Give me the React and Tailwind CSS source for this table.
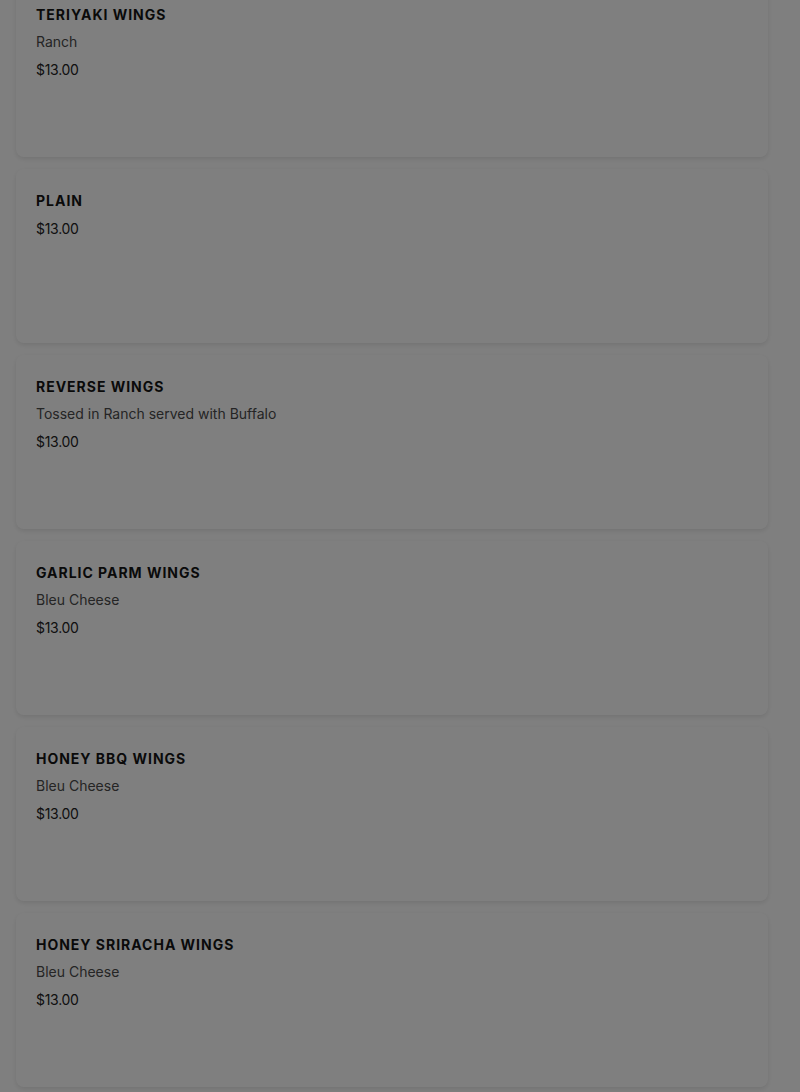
import React from "react";

const items = [
  { name: "Teriyaki Wings", desc: "Ranch" },
  { name: "Plain" },
  { name: "Reverse Wings", desc: "Tossed in Ranch served with Buffalo" },
  { name: "Garlic Parm Wings", desc: "Bleu Cheese" },
  { name: "Honey BBQ Wings", desc: "Bleu Cheese" },
  { name: "Honey Sriracha Wings", desc: "Bleu Cheese" },
];

const App = () => {
  return (
    <div className="relative min-h-[1092px] bg-white overflow-hidden font-['Inter',sans-serif]">
      <div className="flex flex-col gap-3 px-4 -mt-[17px]">
        {items.map((item) => (
          <div
            key={item.name}
            className="h-[174px] w-[752px] rounded-lg bg-white shadow-[0_2px_5px_rgba(0,0,0,0.1)] px-5 pt-[23px]"
          >
            <h3 className="text-[14px] leading-[18px] font-bold uppercase tracking-[0.07em] text-[#141414]">
              {item.name}
            </h3>
            {item.desc && (
              <p className="mt-[9px] text-[14px] leading-[18px] text-[#4a4a4a]">
                {item.desc}
              </p>
            )}
            <p className="mt-[10px] text-[14px] leading-[18px] tracking-[-0.02em] text-[#222]">
              $13.00
            </p>
          </div>
        ))}
      </div>
      <div className="absolute inset-0 bg-black/50" />
    </div>
  );
};

export default App;
